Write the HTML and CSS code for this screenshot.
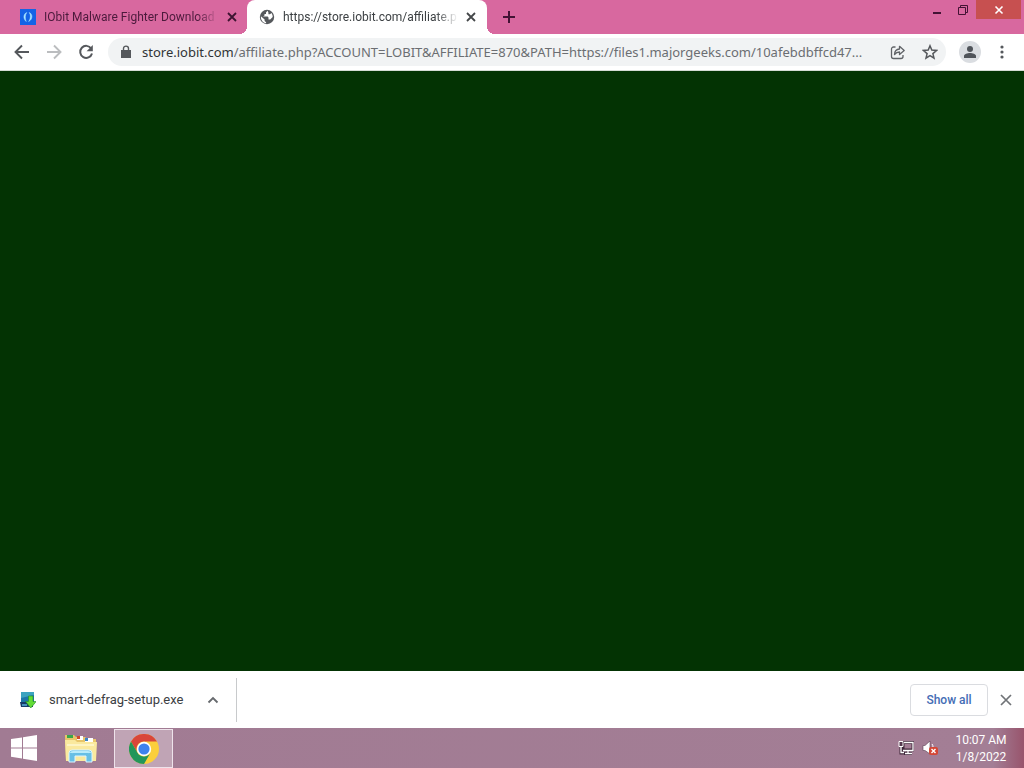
FILE: index.html
```html
<!DOCTYPE html>
<html lang="en">
<head>
    <meta charset="UTF-8">
    <meta name="viewport" content="width=device-width, initial-scale=1.0">
    <title>https://store.iobit.com/affiliate.php</title>
    <link rel="stylesheet" href="styles.css">
</head>
<body>
    <header class="tab-strip">
        <div class="tab">
            <svg class="icon" width="16" height="16" viewBox="0 0 16 16">
                <rect width="16" height="16" fill="#1463e6"/>
                <path d="M6.800 3.500C3.300 5 2.900 9.500 6.200 12.500C4.900 9.500 4.900 6 6.800 3.500zM9.200 3.500C12.900 5 12.900 10.500 8.600 12.500C10.900 9.500 10.900 6 9.200 3.500z" fill="#a9e6ff" stroke="#a9e6ff" stroke-width=".5"/>
            </svg>
            <span class="tab-title">IObit Malware Fighter Download</span>
            <button class="tab-close" aria-label="Close tab">
                <svg width="10" height="10" viewBox="0 0 10 10"><path d="M1 1l8 8M9 1L1 9" stroke="#3d1431" stroke-width="1.800"/></svg>
            </button>
        </div>
        <div class="tab active">
            <svg class="icon" width="16" height="16" viewBox="0 0 16 16">
                <circle cx="8" cy="8" r="7.200" fill="#55585c"/>
                <path d="M8.500 1.800L7 3.400v1.500H5.500v1.700L4 7.500h4.600l.9 1v2h1.700L13.700 8c.1-1.500-.4-3-1.300-4.100L11 5.200H9.400V3.600zM1.900 7.200L5.600 10.400v1.500l1.500 1.400v.9C4 13.900 1.600 11 1.900 7.200z" fill="#fff"/>
            </svg>
            <span class="tab-title">https://store.iobit.com/affiliate.p</span>
            <button class="tab-close" aria-label="Close tab">
                <svg width="10" height="10" viewBox="0 0 10 10"><path d="M1 1l8 8M9 1L1 9" stroke="#444749" stroke-width="1.800"/></svg>
            </button>
        </div>
        <button class="new-tab" aria-label="New tab">
            <svg width="12" height="12" viewBox="0 0 12 12"><path d="M6 0v12M0 6h12" stroke="#431334" stroke-width="2"/></svg>
        </button>
        <div class="window-buttons">
            <button aria-label="Minimize">
                <svg width="12" height="12" viewBox="0 0 12 12"><path d="M2 9h8" stroke="#431334" stroke-width="2"/></svg>
            </button>
            <button aria-label="Restore">
                <svg width="12" height="12" viewBox="0 0 12 12"><path d="M1.500 3.500h7v7h-7zM3.500 3V1.500h7v7H9" fill="none" stroke="#431334"/></svg>
            </button>
            <button class="window-close" aria-label="Close">
                <svg width="10" height="10" viewBox="0 0 10 10"><path d="M1.500 1.500l7 7M8.500 1.500l-7 7" stroke="#fff" stroke-width="1.600"/></svg>
            </button>
        </div>
    </header>

    <nav class="toolbar">
        <button aria-label="Back">
            <svg width="16" height="16" viewBox="0 0 16 16"><path d="M15 8H2M8 1.500L1.500 8 8 14.500" fill="none" stroke="#55585c" stroke-width="1.900"/></svg>
        </button>
        <button aria-label="Forward">
            <svg width="16" height="16" viewBox="0 0 16 16"><path d="M1 8h13M8 1.500L14.500 8 8 14.500" fill="none" stroke="#bbbdbf" stroke-width="1.900"/></svg>
        </button>
        <button aria-label="Reload">
            <svg width="16" height="16" viewBox="0 0 16 16"><path d="M13.200 4.500A6 6 0 1 0 14 9.500" fill="none" stroke="#55585c" stroke-width="2"/><path d="M14.800 1v6.200H8.600z" fill="#55585c"/></svg>
        </button>
        <div class="address-bar">
            <svg class="icon lock" width="10" height="14" viewBox="0 0 10 14">
                <path d="M0 5h10v8H0z" fill="#55585c"/>
                <path d="M2.500 5.500V3.600a2.500 2.500 0 0 1 5 0v1.900" fill="none" stroke="#55585c" stroke-width="1.400"/>
            </svg>
            <label for="url">store.iobit.com</label>
            <input type="text" id="url" spellcheck="false" value="/affiliate.php?ACCOUNT=LOBIT&amp;AFFILIATE=870&amp;PATH=https://files1.majorgeeks.com/10afebdbffcd47...">
            <button aria-label="Share">
                <svg width="16" height="16" viewBox="0 0 16 16"><path d="M5.500 3H3.500a2 2 0 0 0-2 2v7.500a2 2 0 0 0 2 2h7.500a2 2 0 0 0 2-2v-1.500M4.500 10.500C4.700 7 6.500 5.200 9.500 5V2.300L14.200 6.500 9.500 10.500V8C7.500 8 6 8.600 4.500 10.500z" fill="none" stroke="#606367" stroke-width="1.300" stroke-linejoin="round"/></svg>
            </button>
            <button aria-label="Bookmark this tab">
                <svg width="16" height="16" viewBox="0 0 16 16"><path d="M8 1.800l1.800 4.300 4.700.4-3.600 3.100 1.100 4.600L8 11.700l-4 2.500 1.100-4.600L1.500 6.500l4.700-.4z" fill="none" stroke="#55585c" stroke-width="1.500"/></svg>
            </button>
        </div>
        <button class="profile" aria-label="Profile">
            <svg width="12" height="12" viewBox="0 0 12 12"><circle cx="6" cy="3" r="3" fill="#50545a"/><path d="M0 12v-2c0-2 3.500-3 6-3s6 1 6 3v2z" fill="#50545a"/></svg>
        </button>
        <button aria-label="Menu">
            <svg width="4" height="14" viewBox="0 0 4 14" fill="#55585c"><circle cx="2" cy="2" r="1.600"/><circle cx="2" cy="7" r="1.600"/><circle cx="2" cy="12" r="1.600"/></svg>
        </button>
    </nav>

    <main class="page"></main>

    <section class="downloads">
        <div class="download-item">
            <svg class="icon" width="16" height="16" viewBox="0 0 16 16">
                <path d="M1 0h13v10H1z" fill="#1c76a8"/>
                <path d="M1 0h13v3L1 6z" fill="#3ba3bf"/>
                <path d="M0 10h13v5H1z" fill="#153a69"/>
                <path d="M2 12h5v2H2z" fill="#4792bd"/>
                <path d="M8.500 4h4.500v5.500h3.200L10.800 16 5.500 9.500h3z" fill="#62dc35" stroke="#238929" stroke-width=".6"/>
            </svg>
            <span>smart-defrag-setup.exe</span>
            <button aria-label="Download options">
                <svg width="12" height="8" viewBox="0 0 12 8"><path d="M1.500 6.500L6 2l4.500 4.500" fill="none" stroke="#66696d" stroke-width="1.800"/></svg>
            </button>
        </div>
        <button class="show-all">Show all</button>
        <button class="close-shelf" aria-label="Close downloads bar">
            <svg width="12" height="12" viewBox="0 0 12 12"><path d="M1 1l10 10M11 1L1 11" stroke="#707377" stroke-width="1.700"/></svg>
        </button>
    </section>

    <footer class="taskbar">
        <button class="task start" aria-label="Start">
            <svg width="28" height="28" viewBox="0 0 28 28" fill="#fff"><path d="M1 5l11-1.600V13.400H1zM13 3.200L27 1v12.400H13zM1 14.400h11v10L1 22.800zM13 14.400h14V27l-14-2.200z"/></svg>
        </button>
        <button class="task" aria-label="File Explorer">
            <svg width="34" height="30" viewBox="0 0 34 30">
                <path d="M1 4V2h9l2 2h9l2 2h9v22H2z" fill="#e8c66a"/>
                <path d="M3 2h6v3H3z" fill="#38a64b"/>
                <path d="M13 3h6v4h-6z" fill="#fff"/><path d="M13 3h3v3h-3z" fill="#d04b2c"/>
                <path d="M21 5h8v4h-8z" fill="#fff"/><path d="M21 5h3v3h-3z" fill="#3d86c7"/>
                <path d="M1 7h10l2 2h20l-1 19H2z" fill="#fae99e"/>
                <path d="M3 11h27v2H3z" fill="#fdf4c4"/>
                <path d="M5 29V20q0-3 3-3h17q3 0 3 3v9h-6v-6H11v6z" fill="#67bfe5" stroke="#dcf5ff"/>
                <path d="M7 20q0-1 2-1h15q2 0 2 1" fill="none" stroke="#b9ebfa" stroke-width="2"/>
            </svg>
        </button>
        <button class="task running" aria-label="Google Chrome">
            <svg width="30" height="30" viewBox="0 0 30 30">
                <circle cx="15" cy="15" r="15" fill="#fbcf3b"/>
                <path d="M2 7.500A15 15 0 0 1 28 7.500H15A7.500 7.500 0 0 0 8.500 18.750z" fill="#d9463a"/>
                <path d="M2 7.500A15 15 0 0 0 15 30L21.500 18.750A7.500 7.500 0 0 1 8.500 18.750z" fill="#23965a"/>
                <circle cx="15" cy="15" r="7.200" fill="#fff"/>
                <circle cx="15" cy="15" r="5.600" fill="#3f82ed"/>
            </svg>
        </button>
        <div class="tray">
            <svg width="16" height="16" viewBox="0 0 16 16">
                <path d="M5 2.500h10v7.500H5zM10 10v3M6 13.500h8M3 7v6h3" fill="none" stroke="#40283b" stroke-width="3"/>
                <path d="M6 2.500h9v8H5M10 11v2M7 13.500h7M3 7v5.500h3" fill="none" stroke="#fff" stroke-width="1.300"/>
                <path d="M1 1.500h4v5H1z" fill="#55394e" stroke="#fff"/>
            </svg>
            <svg width="16" height="16" viewBox="0 0 16 16">
                <path d="M1 5.500h2L8 1v13L3 10.500H1z" fill="#fff" stroke="#5b3f52" stroke-width=".6"/>
                <path d="M10 4q1 1 1 3" fill="none" stroke="#fff"/>
                <rect x="7" y="7" width="9" height="8" rx="2" fill="#d44736"/>
                <path d="M9.500 9l4 4M13.500 9l-4 4" stroke="#fff" stroke-width="1.400"/>
            </svg>
        </div>
        <div class="clock">
            <span>10:07 AM</span>
            <span>1/8/2022</span>
        </div>
    </footer>
</body>
</html>
```
FILE: styles.css
```css
* {
    box-sizing: border-box;
}
body {
    display: flex;
    flex-direction: column;
    min-height: 100vh;
    margin: 0;
    font-family: Roboto, "Open Sans", sans-serif;
    font-size: 12px;
    color: #3c4043;
}
button {
    display: flex;
    align-items: center;
    justify-content: center;
    flex-shrink: 0;
    padding: 0;
    border: none;
    background: none;
    font-family: inherit;
    cursor: pointer;
}
.icon {
    flex-shrink: 0;
}
.tab-strip {
    display: flex;
    height: 34px;
    background-color: #d8689f;
}
.tab {
    display: flex;
    align-items: center;
    width: 240px;
    margin-left: 7px;
    padding: 0 8px 0 13px;
    color: #4c1a3c;
}
.tab.active {
    position: relative;
    margin-left: 0;
    padding: 0 9px 0 12px;
    border-radius: 8px 8px 0 0;
    background-color: #fff;
    color: #3c4043;
}
.tab.active::before,
.tab.active::after {
    content: "";
    position: absolute;
    bottom: 0;
    width: 8px;
    height: 8px;
}
.tab.active::before {
    right: 100%;
    background: radial-gradient(circle at 0 0, transparent 8px, #fff 8px);
}
.tab.active::after {
    left: 100%;
    background: radial-gradient(circle at 100% 0, transparent 8px, #fff 8px);
}
.tab-title {
    flex: 1;
    margin-left: 8px;
    white-space: nowrap;
    mask-image: linear-gradient(to left, transparent 6px, #000 28px);
}
.tab-close {
    width: 14px;
    height: 16px;
}
.new-tab {
    width: 28px;
    margin-left: 8px;
}
.window-buttons {
    display: flex;
    height: 19px;
    margin-left: auto;
    margin-right: 3px;
}
.window-buttons button {
    width: 26px;
}
.window-buttons .window-close {
    width: 45px;
    background-color: #c75050;
}
.toolbar {
    display: flex;
    align-items: center;
    height: 37px;
    padding: 0 6px;
    border-bottom: 1px solid #d5dbd5;
    background-color: #fff;
}
.toolbar button {
    width: 32px;
    height: 28px;
}
.address-bar {
    display: flex;
    align-items: center;
    flex: 1;
    min-width: 0;
    height: 28px;
    margin: 0 13px 0 6px;
    border-radius: 14px;
    background-color: #f1f3f4;
    font-family: "Noto Sans", "Open Sans", sans-serif;
    font-size: 13px;
}
.lock {
    margin: 0 11px 0 13px;
}
.address-bar label {
    color: #303336;
}
.address-bar input {
    flex: 1;
    min-width: 0;
    padding: 0;
    border: none;
    outline: none;
    background: none;
    font: inherit;
    color: #6b6e72;
    text-overflow: ellipsis;
}
.toolbar .profile {
    width: 22px;
    height: 22px;
    margin-right: 5px;
    border-radius: 50%;
    background-color: #dadde1;
}
.page {
    flex: 1;
    background-color: #033303;
}
.downloads {
    display: flex;
    align-items: center;
    height: 57px;
    padding-right: 10px;
    background-color: #fff;
}
.download-item {
    display: flex;
    align-items: center;
    width: 237px;
    height: 44px;
    padding: 0 11px 0 20px;
    border-right: 1px solid #c8cacc;
    font-size: 13px;
}
.download-item span {
    flex: 1;
    margin-left: 13px;
}
.download-item button {
    width: 24px;
    height: 24px;
}
.show-all {
    width: 78px;
    height: 32px;
    margin-left: auto;
    margin-right: 10px;
    border: 1px solid #dadce0;
    border-radius: 4px;
    font-size: 12px;
    font-weight: 500;
    color: #456db5;
}
.close-shelf {
    width: 16px;
    height: 16px;
}
.taskbar {
    display: flex;
    height: 40px;
    padding-right: 16px;
    background: linear-gradient(to right, #a17b93, #a37e95 97%, #98546c);
    color: #fff;
}
.task {
    width: 66px;
}
.start {
    width: 48px;
}
.running {
    width: 59px;
    height: 39px;
    margin-top: 1px;
    border: 1px solid #eee3eb;
    background-color: #c0a4b5;
}
.tray {
    display: flex;
    align-items: center;
    gap: 8px;
    margin-left: auto;
}
.clock {
    display: flex;
    flex-direction: column;
    align-items: center;
    justify-content: center;
    width: 54px;
    margin-left: 16px;
    padding-top: 2px;
    line-height: 17px;
    white-space: nowrap;
}
```
